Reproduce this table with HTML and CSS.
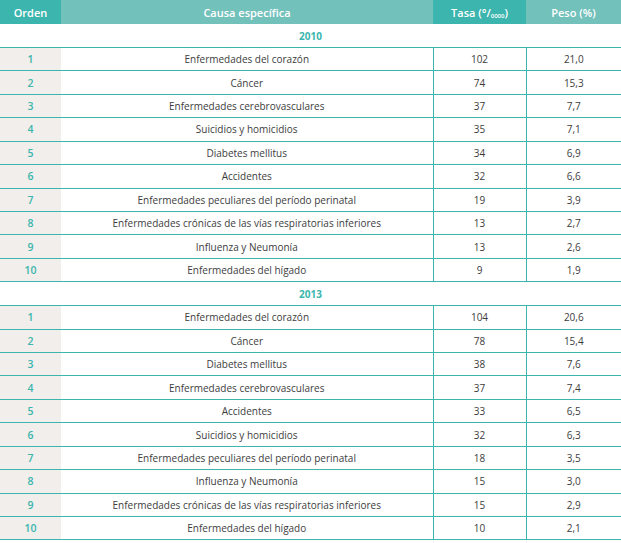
FILE: index.html
```html
<!DOCTYPE html>
<html lang="es">
<head>
<meta charset="utf-8">
<title>Causas de muerte</title>
<link rel="stylesheet" href="styles.css">
</head>
<body>
<table class="tabla">
  <colgroup>
    <col class="c-orden"><col class="c-causa"><col class="c-tasa"><col class="c-peso">
  </colgroup>
  <thead>
    <tr>
      <th class="h-dark">Orden</th>
      <th class="h-light">Causa específica</th>
      <th class="h-dark">Tasa (°/<span class="sub">0000</span>)</th>
      <th class="h-light">Peso (%)</th>
    </tr>
  </thead>
  <tbody>
    <tr class="year"><td colspan="4">2010</td></tr>
    <tr><td class="n">1</td><td>Enfermedades del corazón</td><td class="v">102</td><td class="v last">21,0</td></tr>
    <tr><td class="n">2</td><td>Cáncer</td><td class="v">74</td><td class="v last">15,3</td></tr>
    <tr><td class="n">3</td><td>Enfermedades cerebrovasculares</td><td class="v">37</td><td class="v last">7,7</td></tr>
    <tr><td class="n">4</td><td>Suicidios y homicidios</td><td class="v">35</td><td class="v last">7,1</td></tr>
    <tr><td class="n">5</td><td>Diabetes mellitus</td><td class="v">34</td><td class="v last">6,9</td></tr>
    <tr><td class="n">6</td><td>Accidentes</td><td class="v">32</td><td class="v last">6,6</td></tr>
    <tr><td class="n">7</td><td>Enfermedades peculiares del período perinatal</td><td class="v">19</td><td class="v last">3,9</td></tr>
    <tr><td class="n">8</td><td>Enfermedades crónicas de las vías respiratorias inferiores</td><td class="v">13</td><td class="v last">2,7</td></tr>
    <tr><td class="n">9</td><td>Influenza y Neumonía</td><td class="v">13</td><td class="v last">2,6</td></tr>
    <tr><td class="n">10</td><td>Enfermedades del hígado</td><td class="v">9</td><td class="v last">1,9</td></tr>
    <tr class="year"><td colspan="4">2013</td></tr>
    <tr><td class="n">1</td><td>Enfermedades del corazón</td><td class="v">104</td><td class="v last">20,6</td></tr>
    <tr><td class="n">2</td><td>Cáncer</td><td class="v">78</td><td class="v last">15,4</td></tr>
    <tr><td class="n">3</td><td>Diabetes mellitus</td><td class="v">38</td><td class="v last">7,6</td></tr>
    <tr><td class="n">4</td><td>Enfermedades cerebrovasculares</td><td class="v">37</td><td class="v last">7,4</td></tr>
    <tr><td class="n">5</td><td>Accidentes</td><td class="v">33</td><td class="v last">6,5</td></tr>
    <tr><td class="n">6</td><td>Suicidios y homicidios</td><td class="v">32</td><td class="v last">6,3</td></tr>
    <tr><td class="n">7</td><td>Enfermedades peculiares del período perinatal</td><td class="v">18</td><td class="v last">3,5</td></tr>
    <tr><td class="n">8</td><td>Influenza y Neumonía</td><td class="v">15</td><td class="v last">3,0</td></tr>
    <tr><td class="n">9</td><td>Enfermedades crónicas de las vías respiratorias inferiores</td><td class="v">15</td><td class="v last">2,9</td></tr>
    <tr><td class="n">10</td><td>Enfermedades del hígado</td><td class="v">10</td><td class="v last">2,1</td></tr>
  </tbody>
</table>
</body>
</html>
```
FILE: styles.css
```css
html, body {
  margin: 0;
  padding: 0;
  background: #ffffff;
}

body {
  font-family: "Open Sans", "Liberation Sans", sans-serif;
  color: #3d3d3d;
}

.tabla {
  width: 621px;
  border-collapse: collapse;
  table-layout: fixed;
}

.c-orden { width: 61px; }
.c-causa { width: 372px; }
.c-tasa { width: 93px; }
.c-peso { width: 95px; }

th {
  height: 24px;
  padding: 0;
  color: #ffffff;
  font-size: 11px;
  font-weight: 600;
  text-align: center;
  vertical-align: middle;
}

.h-dark { background: #3bb5ad; }
.h-light { background: #73c1bb; }

.sub {
  font-size: 6px;
  vertical-align: -1px;
}

td {
  height: 22.43px;
  padding: 0;
  font-size: 10px;
  text-align: center;
  vertical-align: middle;
  border-top: 1px solid #3bb5ad;
  border-bottom: 1px solid #3bb5ad;
}

td.n {
  background: #f1eeeb;
  color: #3bb5ad;
  font-size: 10.5px;
  font-weight: 600;
}

td.v {
  border-left: 1px solid #3bb5ad;
}

.year td {
  height: 23px;
  color: #3bb5ad;
  font-weight: 700;
  background: #ffffff;
  border-top: none;
}
```
